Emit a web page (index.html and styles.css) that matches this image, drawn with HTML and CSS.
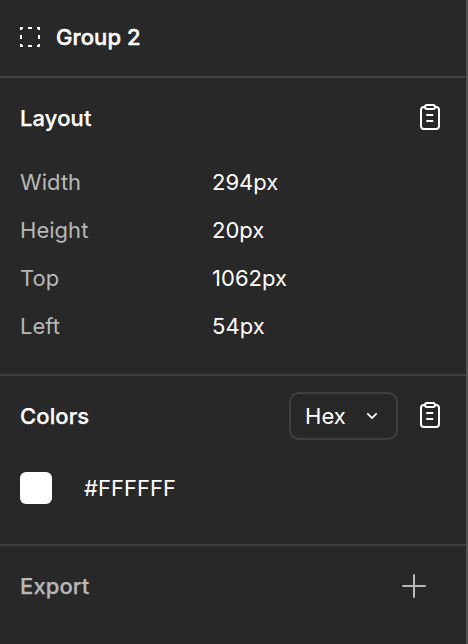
FILE: index.html
```html
<!DOCTYPE html>
<html lang="en">
<head>
<meta charset="utf-8">
<title>Inspect panel</title>
<link rel="stylesheet" href="styles.css">
</head>
<body>
<main class="panel">
  <header class="bar node">
    <svg class="group-icon" width="20" height="20" viewBox="0 0 20 20" fill="none" stroke="currentColor" stroke-width="2">
      <path d="M1 3V1H3M8 1H12M17 1H19V3M19 8V12M19 17V19H17M12 19H8M3 19H1V17M1 12V8"/>
    </svg>
    <h1 class="title">Group 2</h1>
  </header>
  <section class="section">
    <div class="bar">
      <h2 class="title">Layout</h2>
      <svg class="copy" width="20" height="26" viewBox="0 0 20 26" fill="none" stroke="currentColor" stroke-width="2">
        <path d="M5 3H4A3 3 0 0 0 1 6V22A3 3 0 0 0 4 25H16A3 3 0 0 0 19 22V6A3 3 0 0 0 16 3H15"/>
        <rect x="5" y="1" width="10" height="4" rx="2"/><path d="M6.300 11H13.300M6.300 17H13.300"/>
      </svg>
    </div>
    <dl class="props">
      <dt>Width</dt><dd>294px</dd>
      <dt>Height</dt><dd>20px</dd>
      <dt>Top</dt><dd>1062px</dd>
      <dt>Left</dt><dd>54px</dd>
    </dl>
  </section>
  <section class="section">
    <div class="bar">
      <h2 class="title">Colors</h2>
      <button class="select" type="button">Hex
        <svg width="12" height="8" viewBox="0 0 12 8" fill="none" stroke="currentColor" stroke-width="1.800"><path d="M1.300 1.400L6 6.100L10.700 1.400"/></svg>
      </button>
      <svg class="copy" width="20" height="26" viewBox="0 0 20 26" fill="none" stroke="currentColor" stroke-width="2">
        <path d="M5 3H4A3 3 0 0 0 1 6V22A3 3 0 0 0 4 25H16A3 3 0 0 0 19 22V6A3 3 0 0 0 16 3H15"/>
        <rect x="5" y="1" width="10" height="4" rx="2"/><path d="M6.300 11H13.300M6.300 17H13.300"/>
      </svg>
    </div>
    <div class="color"><span class="swatch"></span><span>#FFFFFF</span></div>
  </section>
  <section class="bar export">
    <h2 class="title">Export</h2>
    <svg class="plus" width="24" height="24" viewBox="0 0 24 24" fill="none" stroke="currentColor" stroke-width="2"><path d="M12 .3V23.700M.3 12H23.700"/></svg>
  </section>
</main>
</body>
</html>
```
FILE: styles.css
```css
* { box-sizing: border-box; }
body { margin: 0; background: #282828; }
.panel {
  height: 644px;
  border-right: 2px solid #505050;
  background: #282828;
  color: #fff;
  font: 400 22px/32px Inter, sans-serif;
  letter-spacing: 0.03px;
}
.bar {
  display: flex;
  align-items: center;
  height: 80px;
  padding: 0 26px 0 20px;
}
.node {
  height: 78px;
  gap: 16px;
  padding-bottom: 2px;
  border-bottom: 2px solid #404040;
}
.title {
  margin: 0;
  font-size: 22px;
  font-weight: 500;
  letter-spacing: 0.11px;
  -webkit-text-stroke: 0.25px currentColor;
}
.node .title { -webkit-text-stroke-width: 0.45px; letter-spacing: 0.08px; }
.section { padding-bottom: 24px; border-bottom: 2px solid #404040; }
.copy { margin-left: auto; margin-bottom: 2px; }
.props {
  display: grid;
  grid-template-columns: 192px 1fr;
  grid-auto-rows: 48px;
  align-items: center;
  margin: 0;
  padding-left: 20px;
}
.props dt { color: #b8b8b8; }
.props dd { margin: 0; }
.select {
  display: flex;
  align-items: center;
  justify-content: space-between;
  width: 109px;
  height: 48px;
  margin-left: auto;
  padding: 0 18px 0 14px;
  border: 2px solid #404040;
  border-radius: 10px;
  background: none;
  color: inherit;
  font: inherit;
  letter-spacing: inherit;
}
.select + .copy { margin-left: 22px; }
.color {
  display: flex;
  align-items: center;
  gap: 32px;
  height: 64px;
  padding-left: 20px;
}
.swatch { width: 32px; height: 32px; border-radius: 6px; background: #fff; }
.export { color: #b8b8b8; padding-right: 40px; }
.plus { margin-left: auto; }
```
